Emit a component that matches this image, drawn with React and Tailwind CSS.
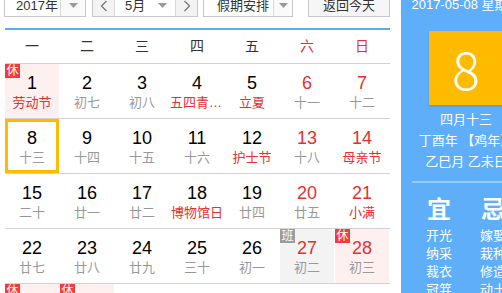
const font = "font-['Liberation_Sans','Noto_Sans_CJK_SC',sans-serif]";

const weekdays = ["一", "二", "三", "四", "五", "六", "日"];

const weeks = [
  [
    { d: 1, l: "劳动节", lr: true, tag: "休" },
    { d: 2, l: "初七" },
    { d: 3, l: "初八" },
    { d: 4, l: "五四青年节", lr: true },
    { d: 5, l: "立夏", lr: true },
    { d: 6, l: "十一", dr: true },
    { d: 7, l: "十二", dr: true },
  ],
  [
    { d: 8, l: "十三", sel: true },
    { d: 9, l: "十四" },
    { d: 10, l: "十五" },
    { d: 11, l: "十六" },
    { d: 12, l: "护士节", lr: true },
    { d: 13, l: "十八", dr: true },
    { d: 14, l: "母亲节", dr: true, lr: true },
  ],
  [
    { d: 15, l: "二十" },
    { d: 16, l: "廿一" },
    { d: 17, l: "廿二" },
    { d: 18, l: "博物馆日", lr: true },
    { d: 19, l: "廿四" },
    { d: 20, l: "廿五", dr: true },
    { d: 21, l: "小满", dr: true, lr: true },
  ],
  [
    { d: 22, l: "廿七" },
    { d: 23, l: "廿八" },
    { d: 24, l: "廿九" },
    { d: 25, l: "三十" },
    { d: 26, l: "初一" },
    { d: 27, l: "初二", dr: true, tag: "班" },
    { d: 28, l: "初三", dr: true, tag: "休" },
  ],
  [
    { d: 29, l: "初四", tag: "休" },
    { d: 30, l: "端午节", lr: true, tag: "休" },
    { d: 31, l: "初六" },
    { d: 1, l: "初七" },
    { d: 2, l: "初八" },
    { d: 3, l: "初九" },
    { d: 4, l: "初十" },
  ],
];

const yi = ["开光", "纳采", "裁衣", "冠笄"];
const ji = ["嫁娶", "栽种", "修造", "动土"];

function Caret() {
  return (
    <svg width="9" height="5" viewBox="0 0 9 5">
      <polygon points="0,0 9,0 4.5,5" fill="#9a9a9a" />
    </svg>
  );
}

function Chevron({ dir }) {
  return (
    <svg width="8" height="12" viewBox="0 0 8 12">
      <polyline
        points={dir === "left" ? "6.5,1 1.5,6 6.5,11" : "1.5,1 6.5,6 1.5,11"}
        fill="none"
        stroke="#777"
        strokeWidth="1.3"
      />
    </svg>
  );
}

function DayCell({ day }) {
  let bg = "";
  if (day.tag === "休") bg = "bg-[#fff0f0]";
  if (day.tag === "班") bg = "bg-[#f3f3f3]";
  const border = day.sel ? "border-[3px] border-[#ffbb00] pt-[5px]" : "pt-[8px]";
  return (
    <div className={`relative flex flex-col items-center overflow-hidden ${bg} ${border}`}>
      {day.tag && (
        <span
          className={`absolute left-0 top-0 h-[14px] w-[15px] text-center text-[12px] leading-[14px] text-white ${
            day.tag === "休" ? "bg-[#f43a3a]" : "bg-[#9c9c9c]"
          }`}
        >
          {day.tag}
        </span>
      )}
      <span className={`text-[18px] leading-[22px] ${day.dr ? "text-[#e5302f]" : "text-black"}`}>
        {day.d}
      </span>
      <span
        className={`w-full truncate text-center text-[13px] leading-[18px] ${
          day.lr ? "text-[#e5302f]" : "text-[#999]"
        }`}
      >
        {day.l}
      </span>
    </div>
  );
}

export default function App() {
  return (
    <div className={`h-[293px] w-[502px] overflow-hidden bg-white text-[#333] ${font}`}>
      <div className="-mt-[6px] flex">
        <div className="w-[401px] shrink-0 pl-[4px]">
          <div className="flex h-[23px] text-[13px] text-[#333]">
            <div className="flex w-[82px] border border-[#c8c8c8]">
              <div className="flex w-[55px] items-center pl-[11px]">2017年</div>
              <div className="flex flex-1 items-center justify-center border-l border-[#d8d8d8] bg-[#fafafa]">
                <Caret />
              </div>
            </div>
            <div className="ml-[6px] flex w-[106px] border border-[#c8c8c8]">
              <div className="flex w-[22px] items-center justify-center border-r border-[#d8d8d8] bg-[#f3f3f3]">
                <Chevron dir="left" />
              </div>
              <div className="flex w-[60px] items-center justify-between pl-[10px] pr-[8px]">
                <span>5月</span>
                <Caret />
              </div>
              <div className="flex flex-1 items-center justify-center border-l border-[#d8d8d8] bg-[#f3f3f3]">
                <Chevron dir="right" />
              </div>
            </div>
            <div className="ml-[5px] flex w-[90px] border border-[#c8c8c8]">
              <div className="flex w-[69px] items-center pl-[13px]">假期安排</div>
              <div className="flex flex-1 items-center justify-center border-l border-[#d8d8d8] bg-[#fafafa]">
                <Caret />
              </div>
            </div>
            <div className="ml-[15px] flex w-[82px] items-center justify-center border border-[#c8c8c8] bg-[#f6f6f6]">
              返回今天
            </div>
          </div>

          <div className="ml-[1px] mt-[11px] h-[2px] w-[385px] bg-[#5ba9f0]" />

          <div className="ml-[1px] grid h-[34px] w-[385px] grid-cols-[repeat(7,54px)] gap-x-px border-b border-[#d2d2d2] text-[14px]">
            {weekdays.map((w, i) => (
              <div
                key={w}
                className={`flex items-center justify-center ${i > 4 ? "text-[#e5302f]" : "text-[#333]"}`}
              >
                {w}
              </div>
            ))}
          </div>

          {weeks.map((week, wi) => (
            <div
              key={wi}
              className="ml-[1px] grid h-[55px] w-[385px] grid-cols-[repeat(7,54px)] gap-x-px border-b border-[#d2d2d2]"
            >
              {week.map((day, di) => (
                <DayCell key={di} day={day} />
              ))}
            </div>
          ))}
        </div>

        <div className="h-[320px] w-[130px] shrink-0 bg-[#5eaef9] text-white">
          <div className="whitespace-nowrap pt-[2px] text-center text-[13px] leading-[18px]">
            2017-05-08 星期一
          </div>
          <div className="mx-auto mt-[17px] flex h-[74px] w-[74px] items-center justify-center bg-[#ffbb00] text-[52px] font-light leading-none shadow-[0_1px_2px_rgba(0,0,0,0.15)] font-['Noto_Sans_CJK_SC',sans-serif]">
            8
          </div>
          <div className="mt-[4px] whitespace-nowrap text-center text-[13px] leading-[21px]">
            <div>四月十三</div>
            <div>丁酉年 【鸡年】</div>
            <div>乙巳月 乙未日</div>
          </div>
          <div className="mx-auto mt-[9px] h-[2px] w-[108px] bg-[#97cafa]" />
          <div className="mx-auto mt-[13px] grid w-[108px] grid-cols-2">
            {[
              ["宜", yi],
              ["忌", ji],
            ].map(([head, items]) => (
              <div key={head} className="flex flex-col items-center">
                <div className="text-[24px] font-bold leading-[28px]">{head}</div>
                <div className="mt-[3px] text-center text-[13px] leading-[18px]">
                  {items.map((t) => (
                    <div key={t}>{t}</div>
                  ))}
                </div>
              </div>
            ))}
          </div>
        </div>
      </div>
    </div>
  );
}
